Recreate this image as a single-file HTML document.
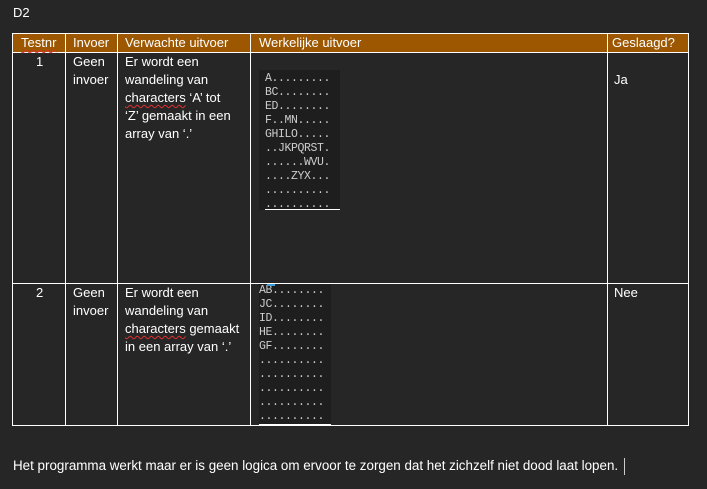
<!DOCTYPE html>
<html><head><meta charset="utf-8"><style>
body{margin:0;width:707px;height:489px;background:#262626;position:relative;overflow:hidden;font-family:"Liberation Sans",sans-serif;color:#fff;font-size:13px}
.a{position:absolute}
.h{background:#fff}
.t{line-height:18px;white-space:nowrap}
.sq{text-decoration:underline wavy #e03030;text-decoration-thickness:1px;text-underline-offset:2px}
.code{position:absolute;background:#1e1e1e;font-family:"Liberation Mono","DejaVu Sans Mono",monospace;font-size:11.5px;line-height:14px;color:#ccc;white-space:pre;letter-spacing:-0.4px}
</style></head><body>
<div class="a t" style="left:13px;top:4px">D2</div>
<div class="a" style="left:12px;top:34px;width:676px;height:18px;background:#9c5700"></div>
<div class="a h" style="left:12px;top:33px;width:677px;height:1px"></div>
<div class="a h" style="left:12px;top:52px;width:677px;height:1px"></div>
<div class="a h" style="left:12px;top:283px;width:677px;height:1px"></div>
<div class="a h" style="left:12px;top:425px;width:677px;height:1px"></div>
<div class="a h" style="left:12px;top:33px;width:1px;height:393px"></div>
<div class="a h" style="left:65px;top:33px;width:1px;height:393px"></div>
<div class="a h" style="left:117px;top:33px;width:1px;height:393px"></div>
<div class="a h" style="left:250px;top:33px;width:1px;height:393px"></div>
<div class="a h" style="left:607px;top:33px;width:1px;height:393px"></div>
<div class="a h" style="left:688px;top:33px;width:1px;height:393px"></div>
<div class="a t" style="left:21px;top:34px"><span class="sq">Testnr</span></div>
<div class="a t" style="left:73px;top:34px">Invoer</div>
<div class="a t" style="left:125px;top:34px">Verwachte uitvoer</div>
<div class="a t" style="left:259px;top:34px">Werkelijke uitvoer</div>
<div class="a t" style="left:612px;top:34px">Geslaagd?</div>
<div class="a t" style="left:36px;top:53px">1</div>
<div class="a t" style="left:73px;top:53px">Geen<br>invoer</div>
<div class="a t" style="left:125px;top:53px">Er wordt een<br>wandeling van<br><span class="sq">characters</span> ‘A’ tot<br>‘Z’ gemaakt in een<br>array van ‘.’</div>
<div class="a t" style="left:614px;top:71px">Ja</div>
<div class="code" style="left:259px;top:70px;width:81px;height:140px;padding-left:6px;padding-top:2px;box-sizing:border-box">A.........
BC........
ED........
F..MN.....
GHILO.....
..JKPQRST.
......WVU.
....ZYX...
..........
..........</div>
<div class="a h" style="left:265px;top:209px;width:75px;height:1px"></div>
<div class="a t" style="left:36px;top:284px">2</div>
<div class="a t" style="left:73px;top:284px">Geen<br>invoer</div>
<div class="a t" style="left:125px;top:284px">Er wordt een<br>wandeling van<br><span class="sq">characters</span> gemaakt<br>in een array van ‘.’</div>
<div class="a t" style="left:614px;top:284px">Nee</div>
<div class="code" style="left:259px;top:284px;width:72px;height:141px">AB........
JC........
ID........
HE........
GF........
..........
..........
..........
..........
..........</div>
<div class="a" style="left:267px;top:284px;width:8px;height:2px;background:#3a9bd5"></div>
<div class="a h" style="left:259px;top:424px;width:72px;height:1px"></div>
<div class="a t" style="left:13px;top:457px;font-size:13.4px">Het programma werkt maar er is geen logica om ervoor te zorgen dat het zichzelf niet dood laat lopen.</div>
<div class="a" style="left:624px;top:458px;width:1px;height:17px;background:#ccc"></div>
</body></html>
